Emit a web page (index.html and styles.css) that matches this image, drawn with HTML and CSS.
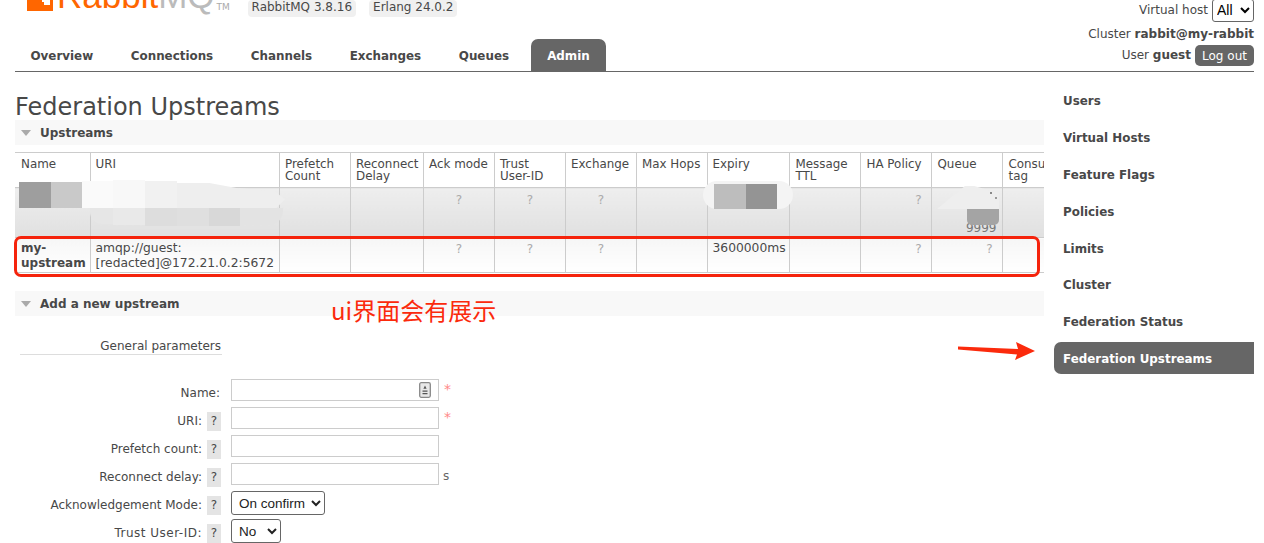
FILE: index.html
```html
<!DOCTYPE html>
<html lang="en">
<head>
<meta charset="utf-8">
<title>RabbitMQ Management</title>
<link rel="stylesheet" href="styles.css">
</head>
<body>
<header class="header">
  <div class="brand">
    <svg class="logo-mark" width="26" height="11" viewBox="0 0 26 11"><path fill="#f60" d="M0 0h15v2h2v3h6V0h3v11H0z"/></svg>
    <span class="logo-text"><span class="logo-orange">Rabbit</span><span class="logo-grey">MQ</span></span>
    <span class="tm">TM</span>
    <span class="version first">RabbitMQ 3.8.16</span>
    <span class="version">Erlang 24.0.2</span>
  </div>
  <div class="login">
    <div class="login-row vhost"><span>Virtual host</span><select class="vhost-select"><option>All</option></select></div>
    <div class="cluster">Cluster <b>rabbit@my-rabbit</b></div>
    <div class="user">User <b>guest</b><button class="logout">Log out</button></div>
  </div>
  <nav class="tabs">
    <a>Overview</a><a>Connections</a><a>Channels</a><a>Exchanges</a><a>Queues</a><a class="active">Admin</a>
  </nav>
</header>
<div class="layout">
  <main class="main">
    <h1>Federation Upstreams</h1>
    <div class="section-head"><span class="tri"></span>Upstreams</div>
    <div class="table-wrap">
      <table class="list">
        <colgroup>
          <col class="c1"><col class="c2"><col class="c3"><col class="c4"><col class="c5"><col class="c6"><col class="c7"><col class="c8"><col class="c9"><col class="c10"><col class="c11"><col class="c12"><col class="c13">
        </colgroup>
        <thead>
          <tr><th>Name</th><th>URI</th><th>Prefetch Count</th><th>Reconnect Delay</th><th>Ack mode</th><th>Trust User-ID</th><th>Exchange</th><th>Max Hops</th><th>Expiry</th><th class="pad">Message TTL</th><th class="pad">HA Policy</th><th class="pad">Queue</th><th class="pad">Consumer tag</th></tr>
        </thead>
        <tbody>
          <tr class="row-a">
            <td></td><td></td><td></td><td></td><td class="q">?</td><td class="q">?</td><td class="q">?</td><td></td><td></td><td></td><td class="qr">?</td><td class="nine">9999</td><td></td>
          </tr>
          <tr class="row-b">
            <td class="name"><b>my-upstream</b></td><td class="uri">amqp://guest:<br>[redacted]@172.21.0.2:5672</td><td></td><td></td><td class="q">?</td><td class="q">?</td><td class="q">?</td><td></td><td class="uri">3600000ms</td><td></td><td class="qr">?</td><td class="qr">?</td><td></td>
          </tr>
        </tbody>
      </table>
      <div class="smear s-lo1"></div><div class="smear s-lo2"></div><div class="smear s-lo3"></div><div class="smear s-lo4"></div><div class="smear s-lo5"></div><div class="smear s-lo6"></div>
      <div class="smear s-hi1"></div><div class="smear s-hi2"></div><div class="smear s-hi3"></div><div class="smear s-hi4"></div>
      <div class="smear s1"></div><div class="smear s2"></div>
      <div class="smear s7"></div><div class="smear s8"></div><div class="smear s9"></div>
      <div class="smear s10"></div><div class="smear s11"></div><div class="smear s12"></div><div class="smear s13"></div>
    </div>
    <div class="section-head add"><span class="tri"></span>Add a new upstream</div>
    <div class="note">ui界面会有展示</div>
    <form class="form">
      <div class="legend">General parameters</div>
      <div class="field first"><label>Name:</label><span class="ctl"><input class="txt"><svg class="key" width="12" height="16" viewBox="0 0 12 16"><rect x=".7" y=".7" width="10.6" height="14.6" rx="1.5" fill="#e8e8e8" stroke="#888" stroke-width="1.3"/><path d="M6 3.400l1.600 3.400H4.400zM3.500 8.500h5v1.300h-5zM3.500 11h5v1.300h-5z" fill="#555"/></svg></span><i class="req">*</i></div>
      <div class="field"><label>URI:<span class="help">?</span></label><span class="ctl"><input class="txt"></span><i class="req">*</i></div>
      <div class="field"><label>Prefetch count:<span class="help">?</span></label><span class="ctl"><input class="txt"></span></div>
      <div class="field"><label>Reconnect delay:<span class="help">?</span></label><span class="ctl"><input class="txt"></span><span class="unit">s</span></div>
      <div class="field"><label>Acknowledgement Mode:<span class="help">?</span></label><select class="sel"><option>On confirm</option></select></div>
      <div class="field"><label><span class="wide">Trust User-ID:</span><span class="help">?</span></label><select class="sel narrow"><option>No</option></select></div>
    </form>
  </main>
  <aside class="side">
    <a>Users</a><a>Virtual Hosts</a><a>Feature Flags</a><a>Policies</a><a>Limits</a><a>Cluster</a><a>Federation Status</a><a class="active">Federation Upstreams</a>
  </aside>
</div>
<div class="redbox"></div>
<svg class="arrow" width="78" height="20" viewBox="0 0 78 20"><path fill="#fb2a0c" d="M0 5.500L60 8 58 1l19 9-20 9 2-5.500L0 8.500z"/></svg>
</body>
</html>
```
FILE: styles.css
```css
* { box-sizing: border-box; }
html, body { margin: 0; padding: 0; height: 543px; overflow: hidden; background: #fff; }
body { position: relative; font-family: "DejaVu Sans", Verdana, sans-serif; font-size: 12px; color: #484848; }
.header { position: relative; height: 72px; margin: 0 10px 0 15px; border-bottom: 1px solid #666; }
.brand { display: flex; align-items: flex-start; height: 17px; overflow: hidden; margin-left: 12px; }
.logo-mark { margin-right: 4px; flex: none; }
.logo-text { font-family: "Liberation Sans", sans-serif; font-size: 35px; line-height: 34px; margin-top: -21px; }
.logo-orange { color: #f60; }
.logo-grey { color: #bbb; }
.tm { font-size: 9px; color: #aaa; margin: 2px 0 0 2px; width: 14px; }
.version { background: #f0f0f0; border-radius: 4px; padding: 0 4px; height: 17px; line-height: 15px; margin-left: 13px; font-size: 12px; color: #484848; }
.version.first { margin-left: 17px; }
.login { position: absolute; right: 0; top: -1px; text-align: right; }
.login-row { display: flex; justify-content: flex-end; align-items: center; gap: 4px; }
.vhost { height: 22px; }
.vhost-select { font-family: "Liberation Sans", sans-serif; font-size: 14px; height: 23px; width: 42px; background: #fff; color: #000; border: 1px solid #666; border-radius: 3px; }
.cluster { margin-top: 4px; height: 19px; line-height: 18px; }
.user { height: 21px; margin-top: 1px; line-height: 21px; }
.login b { font-weight: bold; }
.logout { font: 12px "DejaVu Sans", sans-serif; background: #666; color: #fff; border: 0; border-radius: 5px; height: 21px; width: 59px; padding: 0; margin-left: 4px; vertical-align: top; }
.tabs { position: absolute; left: 0; bottom: 0; height: 32px; display: flex; }
.tabs a { font-weight: bold; font-size: 11.900px; color: #484848; padding: 10px 15.500px 0; margin-right: 6.600px; height: 32px; border-radius: 7px 7px 0 0; }
.tabs a.active { background: #666; color: #fff; margin-right: 0; padding: 10px 16px 0; }
.layout { display: flex; padding: 0 10px 0 15px; gap: 10px; }
.main { width: 1029px; position: relative; flex: none; }
h1 { font-size: 24px; font-weight: normal; margin: 0; height: 48px; padding-top: 21px; line-height: 29px; color: #484848; white-space: nowrap; }
.section-head { background: #f8f8f8; height: 25px; line-height: 26px; font-weight: bold; font-size: 12px; padding-left: 25px; position: relative; color: #484848; }
.tri { position: absolute; left: 6px; top: 10px; width: 0; height: 0; border: 5px solid transparent; border-top: 6px solid #aaa; border-bottom: 0; }
.table-wrap { position: relative; width: 1029px; overflow: hidden; margin-top: 7px; height: 124px; }
.list { border-collapse: collapse; table-layout: fixed; width: 1058px; font-size: 12px; line-height: 12px; color: #484848; }
.c1 { width: 75px; } .c2 { width: 189.500px; } .c3 { width: 71px; } .c4 { width: 73px; } .c5, .c6, .c7 { width: 71px; } .c8 { width: 70.500px; } .c9 { width: 82px; } .c10, .c11, .c12, .c13 { width: 71px; }
.list th, .list td { border: 1px solid #ccc; padding: 0 6px; vertical-align: top; text-align: left; font-weight: normal; }
.list thead th { height: 35px; border-left: 0; background: #fff; padding: 5px; font-size: 11.900px; }
.list thead th:first-child, .list thead th.pad { padding-left: 6px; }
.list th:first-child, .list td:first-child { border-left: 0; }
.row-a td { height: 50px; background: linear-gradient(#eeeeee, #e0e0e0); padding-top: 6px; }
.row-b td { height: 35px; background: linear-gradient(#f6f6f6, #fff); padding-top: 3px; line-height: 15px; }
.row-b .uri { font-size: 12.300px; padding-left: 5px; }
.row-a .q, .row-b .q { text-align: center; color: #aaa; }
.row-a .qr, .row-b .qr { text-align: right; padding-right: 9px; color: #aaa; }
.row-b .q, .row-b .qr { padding-top: 4px; }
.row-a .nine { text-align: right; color: #777; padding: 34px 5px 0 0; }
.smear { position: absolute; }
.s1 { left: 4px; top: 30px; width: 32px; height: 26px; background: #9e9e9e; }
.s2 { left: 36px; top: 30px; width: 31px; height: 26px; background: #c9c9c9; }
.s-hi1 { left: 67px; top: 29px; width: 31px; height: 27px; background: #fafafa; }
.s-hi2 { left: 98px; top: 28px; width: 32px; height: 28px; background: #f8f8f8; }
.s-hi3 { left: 130px; top: 29px; width: 32px; height: 27px; background: #f1f1f1; }
.s-hi4 { left: 162px; top: 31px; width: 108px; height: 25px; background: #eeeeee; clip-path: polygon(0 0, 30% 0, 55% 20%, 90% 32%, 100% 65%, 92% 100%, 0 100%); }
.s-lo1 { left: 75px; top: 56px; width: 23px; height: 16px; background: #e6e6e6; border-radius: 0 0 0 12px; }
.s-lo2 { left: 98px; top: 56px; width: 32px; height: 17px; background: #e9e9e9; }
.s-lo3 { left: 130px; top: 56px; width: 32px; height: 18px; background: #dddddd; }
.s-lo4 { left: 162px; top: 56px; width: 32px; height: 18px; background: #dfdfdf; }
.s-lo5 { left: 194px; top: 56px; width: 31px; height: 18px; background: #d8d8d8; }
.s-lo6 { left: 225px; top: 56px; width: 43px; height: 17px; background: #e3e3e3; border-radius: 0 0 14px 0; }
.s7 { left: 688px; top: 29px; width: 90px; height: 28px; background: #f4f4f4; border-radius: 14px; }
.s8 { left: 699px; top: 32px; width: 32px; height: 25px; background: #bdbdbd; }
.s9 { left: 731px; top: 32px; width: 31px; height: 25px; background: #949494; }
.s10 { left: 922px; top: 34px; width: 62px; height: 23px; background: #eeeeee; clip-path: polygon(0 100%, 45% 0, 60% 0, 100% 30%, 100% 100%); }
.s11 { left: 952px; top: 57px; width: 32px; height: 16px; background: #a4a4a4; border-radius: 0 0 5px 5px; }
.s12 { left: 975px; top: 40px; width: 2px; height: 2px; background: #888; }
.s13 { left: 980px; top: 45px; width: 2px; height: 2px; background: #999; }
.section-head.add { margin-top: 15px; }
.note { position: absolute; left: 316px; top: 223px; font-family: "Noto Sans CJK SC", sans-serif; font-size: 24px; color: #fb2a0c; line-height: 30px; white-space: nowrap; }
.form { margin-top: 21px; padding-left: 5px; }
.legend { width: 202px; text-align: right; line-height: 12px; border-bottom: 1px solid #ddd; height: 18px; padding: 3px 1px 0 0; color: #484848; }
.field { display: flex; align-items: flex-start; height: 28px; }
.field.first { margin-top: 24px; }
.field.first label { padding-right: 1px; }
.field label { width: 201px; display: flex; justify-content: flex-end; align-items: center; height: 20px; margin-top: 4px; }
.wide { letter-spacing: .5px; }
.help { background: #e4e4e4; width: 14px; height: 19px; margin-left: 5px; display: block; text-align: center; line-height: 19px; }
.ctl { position: relative; margin-left: 10px; display: block; }
.txt { width: 208px; height: 22px; border: 1px solid #ccc; display: block; background: #fff; padding: 0; border-radius: 0; }
.key { position: absolute; right: 8px; top: 3px; }
.req { font-style: normal; color: #f88; margin: 2px 0 0 5px; font-size: 14px; }
.unit { margin: 6px 0 0 4px; color: #666; }
.sel { margin-left: 10px; width: 94px; height: 24px; font: 13.500px "Liberation Sans", sans-serif; color: #222; background: #fff; border: 1px solid #666; border-radius: 3px; padding-left: 3px; }
.sel.narrow { width: 50px; }
.side { width: 200px; display: flex; flex-direction: column; padding-top: 12px; flex: none; }
.side a { display: block; font-weight: bold; font-size: 11.900px; height: 36.900px; padding: 10px 9px; color: #484848; white-space: nowrap; }
.side a.active { background: #666; color: #fff; border-radius: 7px 0 0 7px; height: 32px; padding: 10px 9px; }
.redbox { position: absolute; left: 14px; top: 236px; width: 1026px; height: 41px; border: 3px solid #f5230c; border-radius: 7px; }
.arrow { position: absolute; left: 958px; top: 341px; }
```
